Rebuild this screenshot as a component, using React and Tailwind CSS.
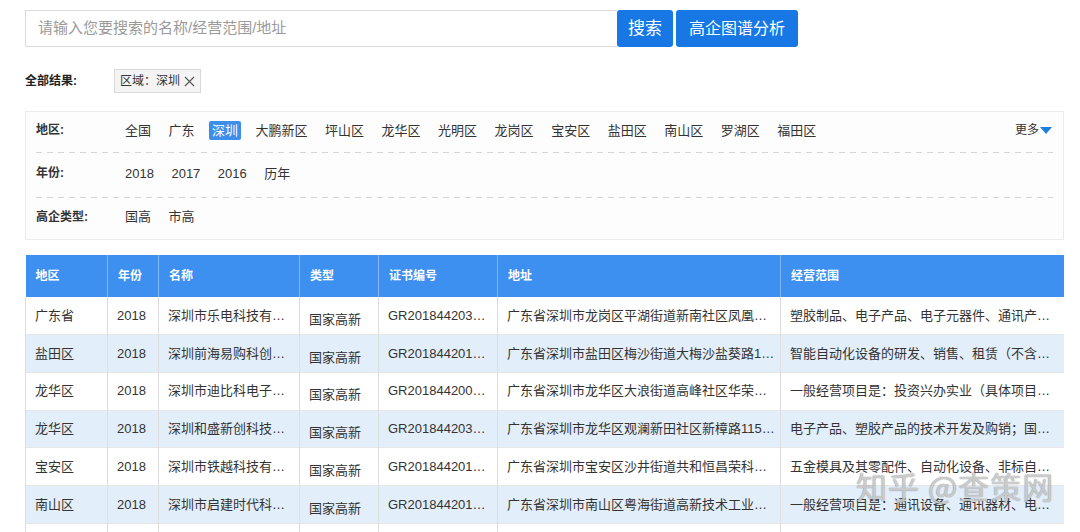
import React from "react";

const F = { fontFamily: '"Liberation Sans", "Noto Sans CJK SC", sans-serif' };

const regions = ["全国", "广东", "深圳", "大鹏新区", "坪山区", "龙华区", "光明区", "龙岗区", "宝安区", "盐田区", "南山区", "罗湖区", "福田区"];
const years = ["2018", "2017", "2016", "历年"];
const types = ["国高", "市高"];

const rows = [
  ["广东省", "2018", "深圳市乐电科技有…", "国家高新", "GR201844203…", "广东省深圳市龙岗区平湖街道新南社区凤凰…", "塑胶制品、电子产品、电子元器件、通讯产…"],
  ["盐田区", "2018", "深圳前海易购科创…", "国家高新", "GR201844201…", "广东省深圳市盐田区梅沙街道大梅沙盐葵路1…", "智能自动化设备的研发、销售、租赁（不含…"],
  ["龙华区", "2018", "深圳市迪比科电子…", "国家高新", "GR201844200…", "广东省深圳市龙华区大浪街道高峰社区华荣…", "一般经营项目是：投资兴办实业（具体项目…"],
  ["龙华区", "2018", "深圳和盛新创科技…", "国家高新", "GR201844203…", "广东省深圳市龙华区观澜新田社区新樟路115…", "电子产品、塑胶产品的技术开发及购销；国…"],
  ["宝安区", "2018", "深圳市铁越科技有…", "国家高新", "GR201844201…", "广东省深圳市宝安区沙井街道共和恒昌荣科…", "五金模具及其零配件、自动化设备、非标自…"],
  ["南山区", "2018", "深圳市启建时代科…", "国家高新", "GR201844201…", "广东省深圳市南山区粤海街道高新技术工业…", "一般经营项目是：通讯设备、通讯器材、电…"],
  ["", "", "", "", "", "", ""],
];

const widths = ["w-[82px]", "w-[51px]", "w-[141px]", "w-[79px]", "w-[119px]", "w-[283px]", "w-[283px]"];
const heads = ["地区", "年份", "名称", "类型", "证书编号", "地址", "经营范围"];

function Dashed() {
  return <div className="h-px w-full bg-[linear-gradient(to_right,#d6d6d6_6px,transparent_6px)] bg-[length:11px_1px] bg-repeat-x" />;
}

function FilterRow({ label, items, active, more, h }) {
  return (
    <div className={"flex items-center pb-[4px] " + h}>
      <div className="w-[86px] text-[12px] font-bold text-[#333]">{label}</div>
      <div className="flex items-center gap-[11.5px] flex-1">
        {items.map((it) => (
          <span
            key={it}
            className={
              "px-[3px] leading-[19px] text-[13px] rounded-[2px] " +
              (it === active ? "bg-[#3d8eea] text-white" : "text-[#333]")
            }
          >
            {it}
          </span>
        ))}
      </div>
      {more && (
        <div className="flex items-center text-[12px] text-[#333] pr-[1px]">
          更多
          <svg width="12" height="7" viewBox="0 0 12 7" className="ml-[1px]">
            <path d="M0 0 L12 0 L6 7 Z" fill="#1f7fdc" />
          </svg>
        </div>
      )}
    </div>
  );
}

export default function App() {
  return (
    <div className="w-[1080px] h-[532px] bg-white overflow-hidden relative" style={F}>
      <div className="pl-[25px] pt-[10px]">
        {/* search */}
        <div className="flex items-stretch h-[37px]">
          <div className="w-[592px] border border-[#dcdcdc] border-r-0 flex items-center pl-[12px] text-[15px] text-[#9a9a9a]">
            请输入您要搜索的名称/经营范围/地址
          </div>
          <button className="w-[56px] bg-[#1677e5] text-white text-[17px] rounded-[3px]">搜索</button>
          <button className="ml-[3px] w-[122px] bg-[#1677e5] text-white text-[16px] rounded-[3px]">高企图谱分析</button>
        </div>

        {/* all results */}
        <div className="flex items-center mt-[22px] h-[24px]">
          <div className="w-[89px] text-[12px] font-bold text-[#222]">全部结果:</div>
          <div className="h-[24px] px-[5px] flex items-center bg-[#f4f4f4] border border-[#d9d9d9] text-[12px] text-[#333]">
            区域：深圳
            <svg width="11" height="11" viewBox="0 0 11 11" className="ml-[4px]">
              <path d="M1 1 L10 10 M10 1 L1 10" stroke="#555" strokeWidth="1.1" />
            </svg>
          </div>
        </div>

        {/* filter panel */}
        <div className="mt-[18px] w-[1039px] border border-[#ececec] bg-[#fdfdfd] px-[10px]">
          <FilterRow label="地区:" items={regions} active="深圳" more h="h-[40px]" />
          <Dashed />
          <FilterRow label="年份:" items={years} h="h-[44px]" />
          <Dashed />
          <FilterRow label="高企类型:" items={types} h="h-[41px]" />
        </div>

        {/* table */}
        <table className="mt-[15px] border-collapse table-fixed w-[1038px]">
          <thead>
            <tr className="bg-[#3d8ff0] h-[42px]">
              {heads.map((h, i) => (
                <th
                  key={h}
                  className={widths[i] + " text-left font-bold text-[12px] text-white px-[10px] border-l border-[#7fb6f5] first:border-l-0"}
                >
                  {h}
                </th>
              ))}
            </tr>
          </thead>
          <tbody>
            {rows.map((r, ri) => (
              <tr key={ri} className={(ri % 2 === 1 ? "bg-[#e2eefa]" : "bg-white") + " h-[37.7px] border-b border-[#e6e6e6]"}>
                {r.map((c, ci) => (
                  <td
                    key={ci}
                    className={
                      "px-[9px] text-[13px] text-[#333] whitespace-nowrap overflow-hidden border-l border-[#dedede] " +
                      (ci === 3 ? "pt-[8px]" : "")
                    }
                  >
                    {c}
                  </td>
                ))}
              </tr>
            ))}
          </tbody>
        </table>
      </div>

      {/* watermark */}
      <div
        className="absolute left-[856px] top-[470px] text-[31px] leading-none whitespace-nowrap tracking-[1px] text-white/60 pointer-events-none"
        style={{ fontFamily: '"Noto Sans CJK SC", sans-serif', textShadow: "0 0 1px rgba(90,90,90,0.55), 0 0 1px rgba(90,90,90,0.55)" }}
      >
        知乎 @查策网
      </div>
    </div>
  );
}
